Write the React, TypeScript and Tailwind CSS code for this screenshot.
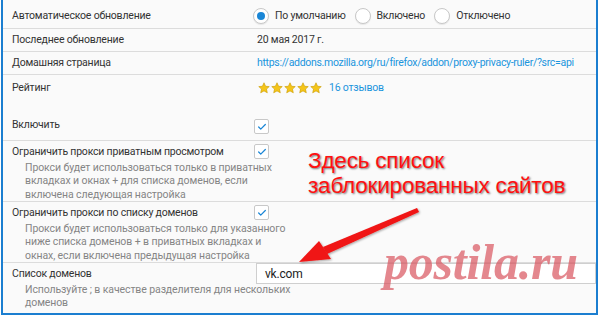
import { Check } from "lucide-react";

const font = { fontFamily: 'Roboto, "Liberation Sans", sans-serif' };

function Radio({ checked, label }: { checked?: boolean; label: string }) {
  return (
    <div className="flex items-center gap-[6px]">
      <span className="w-[16px] h-[16px] rounded-full border border-[#c8c8c8] bg-white shadow-[0_1px_1px_rgba(0,0,0,0.08)] flex items-center justify-center">
        {checked && <span className="w-[8px] h-[8px] rounded-full bg-[#1a86d6]" />}
      </span>
      <span>{label}</span>
    </div>
  );
}

function Box() {
  return (
    <span className="w-[15px] h-[15px] border border-[#c8c8c8] bg-white rounded-[2px] flex items-center justify-center shrink-0">
      <Check className="w-[10px] h-[10px] text-[#1a86d6]" strokeWidth={3} />
    </span>
  );
}

function Star() {
  return (
    <svg width="12" height="12" viewBox="0 0 24 24">
      <path
        d="M12 1.5l3.2 7 7.3.7-5.5 5 1.6 7.4L12 17.8l-6.6 3.8L7 14.2 1.5 9.2l7.3-.7z"
        fill="#f5c518"
        stroke="#c99a00"
        strokeWidth="1.2"
      />
    </svg>
  );
}

function Desc({ children }: { children: React.ReactNode }) {
  return (
    <div className="pl-[13px] text-[10.5px] leading-[13.5px] text-[#858585] mt-[1px] whitespace-nowrap tracking-[-0.1px]">
      {children}
    </div>
  );
}

export default function App() {
  return (
    <div className="w-[600px] h-[317px] bg-white pl-[1px] pr-[2px] overflow-hidden" style={font}>
      <div className="relative h-[315px] border-l-2 border-r-2 border-b-2 border-[#1b7ed0] bg-[#fafafa] text-[10.5px] tracking-[-0.2px] text-[#333] overflow-hidden whitespace-nowrap">
        <div className="flex flex-col">
          <div className="h-[29px] flex items-center border-b border-[#dcdcdc] pl-[9px] pt-[4px]">
            <div className="w-[241px]">Автоматическое обновление</div>
            <div className="flex items-center gap-[9px]">
              <Radio checked label="По умолчанию" />
              <Radio label="Включено" />
              <Radio label="Отключено" />
            </div>
          </div>
          <div className="h-[23px] flex items-center border-b border-[#dcdcdc] pl-[9px]">
            <div className="w-[245px]">Последнее обновление</div>
            <div>20 мая 2017 г.</div>
          </div>
          <div className="h-[23px] flex items-center border-b border-[#dcdcdc] pl-[9px]">
            <div className="w-[245px]">Домашняя страница</div>
            <div className="text-[#1a95dd] tracking-[-0.3px]">https://addons.mozilla.org/ru/firefox/addon/proxy-privacy-ruler/?src=api</div>
          </div>
          <div className="h-[26px] flex items-center pl-[9px]">
            <div className="w-[246px]">Рейтинг</div>
            <div className="flex items-center gap-[1px]">
              <Star />
              <Star />
              <Star />
              <Star />
              <Star />
              <span className="ml-[6px] text-[#1a95dd]">16 отзывов</span>
            </div>
          </div>
          <div className="h-[36px] flex items-end pb-[6px] border-b border-[#dcdcdc] pl-[9px] mt-[4px]">
            <div className="w-[242px] pb-[1px]">Включить</div>
            <Box />
          </div>
          <div className="h-[61px] border-b border-[#dcdcdc] pl-[9px] pt-[3px]">
            <div className="flex items-center">
              <div className="w-[242px]">Ограничить прокси приватным просмотром</div>
              <Box />
            </div>
            <Desc>
              Прокси будет использоваться только в приватных
              <br />
              вкладках и окнах + для списка доменов, если
              <br />
              включена следующая настройка
            </Desc>
          </div>
          <div className="h-[61px] border-b border-[#dcdcdc] pl-[9px] pt-[3px]">
            <div className="flex items-center">
              <div className="w-[242px]">Ограничить прокси по списку доменов</div>
              <Box />
            </div>
            <Desc>
              Прокси будет использоваться только для указанного
              <br />
              ниже списка доменов + в приватных вкладках и
              <br />
              окнах, если включена предыдущая настройка
            </Desc>
          </div>
          <div className="flex pl-[9px]">
            <div className="w-[244px] pt-[3px]">
              <div>Список доменов</div>
              <Desc>
                Используйте ; в качестве разделителя для нескольких
                <br />
                доменов
              </Desc>
            </div>
            <div className="flex-1 h-[21px] bg-white border border-[#cfcfcf] pl-[8px] flex items-center text-[12px] text-[#222]">
              vk.com
            </div>
          </div>
        </div>

        <div
          className="absolute left-[305px] top-[148px] text-[22.5px] leading-[25px] text-[#ff1010] [text-shadow:1px_1px_2px_rgba(0,0,0,0.55)]"
          style={{ fontFamily: '"Liberation Sans", Arial, sans-serif' }}
        >
          Здесь список
          <br />
          заблокированных сайтов
        </div>

        <svg className="absolute left-0 top-0" width="595" height="315" viewBox="0 0 595 315">
          <defs>
            <filter id="sh" x="-20%" y="-20%" width="140%" height="140%">
              <feDropShadow dx="1" dy="1" stdDeviation="1" floodColor="#000" floodOpacity="0.35" />
            </filter>
          </defs>
          <g filter="url(#sh)" fill="#f01414">
            <path d="M414 208 L416 212 L324 254 L320 247 Z" />
            <path d="M296 262 L316 241 L328 259 Z" />
          </g>
        </svg>

        <div
          className="absolute left-[381px] top-[237px] text-[50px] font-bold italic leading-none text-[#d9545e]/70"
          style={{ fontFamily: '"Liberation Serif", "DejaVu Serif", serif' }}
        >
          postila.ru
        </div>
      </div>
    </div>
  );
}
